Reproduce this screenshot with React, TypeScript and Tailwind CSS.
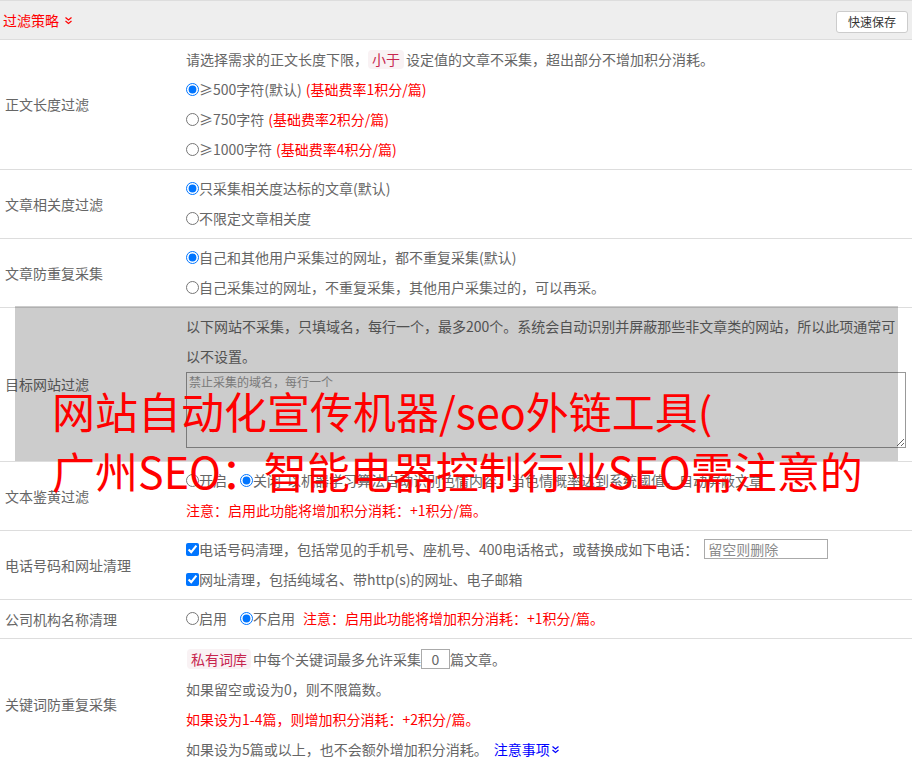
import type { ReactNode } from 'react';

function Row({ label, children, pad = 'pt-[3px] pb-[5px]' }: { label: string; children: ReactNode; pad?: string }) {
  return (
    <div className="flex border-b border-[#ddd]">
      <div className="flex w-[186px] shrink-0 items-center pl-[5px]">{label}</div>
      <div className={`min-w-0 flex-1 ${pad}`}>{children}</div>
    </div>
  );
}

function Line({ children }: { children: ReactNode }) {
  return <div className="flex h-[30px] items-center whitespace-nowrap">{children}</div>;
}

function Tag({ children }: { children: ReactNode }) {
  return <span className="rounded-[4px] bg-[#f9f2f4] px-[4px] leading-[19px] text-[#c7254e]">{children}</span>;
}

function Radio({ name, checked }: { name: string; checked?: boolean }) {
  return <input type="radio" name={name} defaultChecked={checked} className="m-0 h-[13px] w-[13px]" />;
}

function Check() {
  return <input type="checkbox" defaultChecked className="m-0 h-[13px] w-[13px]" />;
}

function DoubleDown({ color }: { color: string }) {
  return (
    <svg width="9" height="9" viewBox="0 0 9 9" fill="none" stroke={color} strokeWidth="1.2">
      <path d="M1.5 1.5 L4.5 4 L7.5 1.5" />
      <path d="M1.5 5 L4.5 7.5 L7.5 5" />
    </svg>
  );
}

export default function App() {
  return (
    <div className="relative w-[912px] bg-white font-['Noto_Sans_CJK_SC','Microsoft_YaHei',sans-serif] text-[14px] text-[#666]">
      {/* header */}
      <div className="flex h-[40px] items-center justify-between border-y border-[#ddd] bg-[#eee] pl-[3px] pr-[4px]">
        <div className="flex items-center gap-[5px] text-[#f00]">
          <span>过滤策略</span>
          <DoubleDown color="#f00" />
        </div>
        <button className="mt-[3px] h-[22px] w-[72px] rounded-[3px] border border-[#ccc] bg-white text-[12px] text-[#333]">快速保存</button>
      </div>

      <Row label="正文长度过滤" pad="pt-[4px] pb-[5px]">
        <Line>
          请选择需求的正文长度下限，<Tag>小于</Tag>
          <span className="ml-[2px]">设定值的文章不采集，超出部分不增加积分消耗。</span>
        </Line>
        <Line>
          <Radio name="len" checked />
          <span>≥500字符(默认)</span>
          <span className="ml-[4px] text-[#f00]">(基础费率1积分/篇)</span>
        </Line>
        <Line>
          <Radio name="len" />
          <span>≥750字符</span>
          <span className="ml-[4px] text-[#f00]">(基础费率2积分/篇)</span>
        </Line>
        <Line>
          <Radio name="len" />
          <span>≥1000字符</span>
          <span className="ml-[4px] text-[#f00]">(基础费率4积分/篇)</span>
        </Line>
      </Row>

      <Row label="文章相关度过滤">
        <Line>
          <Radio name="rel" checked />
          <span>只采集相关度达标的文章(默认)</span>
        </Line>
        <Line>
          <Radio name="rel" />
          <span>不限定文章相关度</span>
        </Line>
      </Row>

      <Row label="文章防重复采集">
        <Line>
          <Radio name="dup" checked />
          <span>自己和其他用户采集过的网址，都不重复采集(默认)</span>
        </Line>
        <Line>
          <Radio name="dup" />
          <span>自己采集过的网址，不重复采集，其他用户采集过的，可以再采。</span>
        </Line>
      </Row>

      <Row label="目标网站过滤" pad="pt-[3px] pb-[4px]">
        <Line>以下网站不采集，只填域名，每行一个，最多200个。系统会自动识别并屏蔽那些非文章类的网站，所以此项通常可</Line>
        <Line>以不设置。</Line>
        <textarea
          placeholder="禁止采集的域名，每行一个"
          className="mt-[1px] mb-[9px] block h-[76px] w-[720px] border border-[#999] px-[2px] text-[12px] placeholder:text-[#999]"
        />
      </Row>

      <Row label="文本鉴黄过滤">
        <Line>
          <Radio name="porn" />
          <span>开启</span>
          <span className="ml-[13px] flex items-center">
            <Radio name="porn" checked />
            <span>关闭</span>
          </span>
          <span className="ml-[6px]">以机器学习算法自动识别色情内容，当色情概率达到系统阈值，自动屏蔽文章</span>
        </Line>
        <Line>
          <span className="text-[#f00]">注意：启用此功能将增加积分消耗：+1积分/篇。</span>
        </Line>
      </Row>

      <Row label="电话号码和网址清理">
        <Line>
          <Check />
          <span>电话号码清理，包括常见的手机号、座机号、400电话格式，或替换成如下电话：</span>
          <input
            placeholder="留空则删除"
            className="ml-[6px] h-[20px] w-[124px] border border-[#aaa] px-[3px] text-[14px] placeholder:text-[#8a8a8a]"
          />
        </Line>
        <Line>
          <Check />
          <span>网址清理，包括纯域名、带http(s)的网址、电子邮箱</span>
        </Line>
      </Row>

      <Row label="公司机构名称清理">
        <Line>
          <Radio name="org" />
          <span>启用</span>
          <span className="ml-[13px] flex items-center">
            <Radio name="org" checked />
            <span>不启用</span>
          </span>
          <span className="ml-[8px] text-[#f00]">注意：启用此功能将增加积分消耗：+1积分/篇。</span>
        </Line>
      </Row>

      <div className="flex">
        <div className="flex w-[186px] shrink-0 items-center pl-[5px]">关键词防重复采集</div>
        <div className="flex-1 pt-[5px] pb-[6px]">
          <Line>
            <span className="ml-[1px]">
              <Tag>私有词库</Tag>
            </span>
            <span className="ml-[2px]">中每个关键词最多允许采集</span>
            <input defaultValue="0" className="h-[20px] w-[29px] border border-[#aaa] text-center text-[14px] text-[#666]" />
            <span>篇文章。</span>
          </Line>
          <Line>如果留空或设为0，则不限篇数。</Line>
          <Line>
            <span className="text-[#f00]">如果设为1-4篇，则增加积分消耗：+2积分/篇。</span>
          </Line>
          <Line>
            <span>如果设为5篇或以上，也不会额外增加积分消耗。</span>
            <span className="ml-[6px] flex items-center gap-[1px] text-[#00f]">
              注意事项
              <DoubleDown color="#00f" />
            </span>
          </Line>
        </div>
      </div>

      {/* overlay */}
      <div className="pointer-events-none absolute left-[15px] top-[306px] h-[155px] w-[883px] bg-black/20" />
      <div className="pointer-events-none absolute left-[52px] top-[380px] whitespace-nowrap text-[43px] leading-[60px] text-[#f00]">
        网站自动化宣传机器/seo外链工具(
        <br />
        广州SEO：智能电器控制行业SEO需注意的
      </div>
    </div>
  );
}
